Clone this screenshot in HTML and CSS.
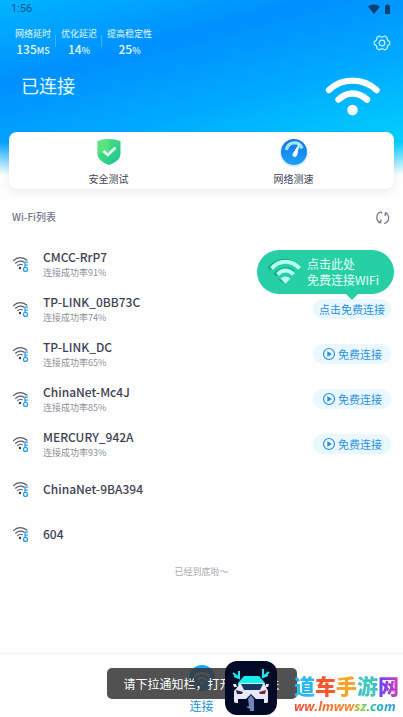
FILE: index.html
```html
<!DOCTYPE html>
<html lang="zh-CN">

<head>
  <meta charset="utf-8">
  <meta name="viewport" content="width=device-width, initial-scale=1">
  <title>WiFi</title>
  <link rel="stylesheet" href="styles.css">
</head>

<body>
  <!-- shared icons -->
  <svg class="defs" aria-hidden="true">
    <symbol id="wifi-key" viewBox="0 0 18 18">
      <g fill="none" stroke="#565b69" stroke-width="1.2" stroke-linecap="round">
        <path d="M1.500 5.600C5.500 1.600 11 1.600 15 5.200" />
        <path d="M3.600 8.200C6.400 5.500 10 5.500 12 7.200" />
        <path d="M5.600 10.600C7.200 9.200 9 9 10.200 9.700" />
      </g>
      <circle cx="8" cy="13" r="1.200" fill="#333a4a" />
      <g fill="none" stroke="#2a9df0" stroke-width="1.300">
        <circle cx="13.500" cy="14.400" r="2" />
        <path d="M13 12.400V7.200H16M13 10.200H15.800" />
      </g>
    </symbol>
    <symbol id="play" viewBox="0 0 14 14">
      <circle cx="7" cy="7" r="5.500" fill="none" stroke="#2a8fe0" stroke-width="1.200" />
      <path d="M5.300 4.600Q5.300 4.200 5.800 4.400L9.300 6.600Q9.700 7 9.300 7.400L5.800 9.600Q5.300 9.800 5.300 9.400Z" fill="#2a8fe0" />
    </symbol>
  </svg>

  <header class="header">
    <div class="status">
      <span>1:56</span>
      <svg width="24" height="11" viewBox="0 0 24 11">
        <path d="M0 2.500Q6 -1.500 12 2.500L6 10Z" fill="#0a3f73" />
        <path d="M17 1.500H18.200V0.500H20.600V1.500H22V10H17Z" fill="#0a3f73" />
      </svg>
    </div>

    <div class="top">
      <ul class="stats">
        <li><span>网络延时</span><b>135<small>MS</small></b></li>
        <li><span>优化延迟</span><b>14<small>%</small></b></li>
        <li><span>提高稳定性</span><b>25<small>%</small></b></li>
      </ul>
      <button class="icon-btn" type="button" aria-label="设置">
        <svg width="18" height="18" viewBox="0 0 18 18" fill="none" stroke="#c4f4ff" stroke-width="1.200" stroke-linejoin="round">
          <path d="M6.200 2.100Q9 4 11.800 2.100L14 3.400Q14 6.700 16.700 7.600V10.400Q14 11.300 14 14.600L11.800 15.900Q9 14 6.200 15.900L4 14.600Q4 11.300 1.300 10.400V7.600Q4 6.700 4 3.400Z" />
          <circle cx="9" cy="9" r="2.800" />
        </svg>
      </button>
    </div>

    <div class="hero">
      <h1>已连接</h1>
      <svg width="56" height="44" viewBox="0 0 56 44" fill="none" stroke="#fff" stroke-linecap="round">
        <path d="M4 18C17 5.500 38 5.500 51.500 18" stroke-width="6.400" />
        <path d="M13.500 27.500C22 19.500 33 19.500 42 27.500" stroke-width="6.400" />
        <circle cx="27.500" cy="38" r="5.300" fill="#fff" stroke="none" />
      </svg>
    </div>
  </header>

  <nav class="tools">
    <a href="#">
      <svg width="30" height="30" viewBox="0 0 30 30">
        <defs>
          <linearGradient id="shield" x1="0" y1="0" x2="1" y2="1">
            <stop offset="0" stop-color="#52df7e" />
            <stop offset="0.500" stop-color="#38d684" />
            <stop offset="1" stop-color="#16bf9c" />
          </linearGradient>
        </defs>
        <path d="M15 2Q21 2 26.500 4V17Q26.500 24 15 28Q3.500 24 3.500 17V4Q9 2 15 2Z" fill="url(#shield)" />
        <path d="M15 2Q9 2 3.500 4V17L15 15Z" fill="#7bed83" opacity="0.400" />
        <path d="M9.500 14L13.800 18L21.500 10.500" fill="none" stroke="#e8fff3" stroke-width="2.600" />
      </svg>
      安全测试
    </a>
    <a href="#">
      <svg width="30" height="30" viewBox="0 0 30 30">
        <defs>
          <linearGradient id="gauge" x1="0" y1="0" x2="0" y2="1">
            <stop offset="0" stop-color="#1673e6" />
            <stop offset="1" stop-color="#1ba2fb" />
          </linearGradient>
        </defs>
        <circle cx="15" cy="16" r="14" fill="#d7effd" />
        <circle cx="15" cy="15" r="13" fill="url(#gauge)" />
        <path d="M7.300 13C9 4.300 20.500 3.300 22.800 11.500" fill="none" stroke="#9be8fc" stroke-width="3.400" />
        <path d="M20 7.500L17.600 18.500A2 2 0 0 1 13.800 17.500Z" fill="#f0fcff" stroke="#f0fcff" stroke-linejoin="round" />
      </svg>
      网络测速
    </a>
  </nav>

  <main>
    <div class="list-head">
      <h2>Wi-Fi列表</h2>
      <button class="icon-btn" type="button" aria-label="刷新">
        <svg width="14" height="16" viewBox="0 0 14 16" fill="none" stroke="#6b727d" stroke-width="1.200">
          <path d="M6 4.200L4.800 3A5.600 5.600 0 0 0 4.400 13.600M4.800 10.500V13.600H2.500M8 14.500A5.600 5.600 0 0 0 9.600 4M9.200 7V4H11.500" />
        </svg>
      </button>
    </div>

    <ul class="list">
      <li>
        <svg class="signal"><use href="#wifi-key" /></svg>
        <div class="name"><b>CMCC-RrP7</b><span>连接成功率91%</span></div>
      </li>
      <li>
        <svg class="signal"><use href="#wifi-key" /></svg>
        <div class="name"><b>TP-LINK_0BB73C</b><span>连接成功率74%</span></div>
        <button class="connect" type="button">点击免费连接</button>
        <div class="tip">
          <svg width="34" height="28" viewBox="0 0 34 28">
            <g fill="none" stroke="#0ca589" stroke-width="4">
              <path d="M1 11C9 1 22 0 30 9M7 17C13 10 20 10 25 14" />
            </g>
            <path d="M10 21L17 26L21 23" fill="#0ca589" />
            <g fill="none" stroke="#b5fff0" stroke-width="4">
              <path d="M3.500 10.500C11 1.500 24 1.500 31.500 10.500M9.500 16.500C14 11 21 11 25.500 16.500" />
            </g>
            <path d="M12.500 20.500Q17.500 16.500 22.500 20.500L17.500 26Z" fill="#b5fff0" />
          </svg>
          <p>点击此处<br>免费连接WIFi</p>
        </div>
      </li>
      <li>
        <svg class="signal"><use href="#wifi-key" /></svg>
        <div class="name"><b>TP-LINK_DC</b><span>连接成功率65%</span></div>
        <button class="connect" type="button"><svg><use href="#play" /></svg>免费连接</button>
      </li>
      <li>
        <svg class="signal"><use href="#wifi-key" /></svg>
        <div class="name"><b>ChinaNet-Mc4J</b><span>连接成功率85%</span></div>
        <button class="connect" type="button"><svg><use href="#play" /></svg>免费连接</button>
      </li>
      <li>
        <svg class="signal"><use href="#wifi-key" /></svg>
        <div class="name"><b>MERCURY_942A</b><span>连接成功率93%</span></div>
        <button class="connect" type="button"><svg><use href="#play" /></svg>免费连接</button>
      </li>
      <li>
        <svg class="signal"><use href="#wifi-key" /></svg>
        <div class="name"><b>ChinaNet-9BA394</b></div>
      </li>
      <li>
        <svg class="signal"><use href="#wifi-key" /></svg>
        <div class="name"><b>604</b></div>
      </li>
    </ul>
    <p class="end">已经到底啦～</p>
  </main>

  <footer class="tabbar">
    <a href="#">
      <svg width="26" height="26" viewBox="0 0 26 26">
        <circle cx="13" cy="13" r="13" fill="#17a5f7" />
        <g fill="none" stroke="#fff" stroke-width="2" stroke-linecap="round">
          <path d="M6 11C10 7 16 7 20 11M9 14.500C11.500 12 14.500 12 17 14.500" />
        </g>
        <circle cx="13" cy="18" r="1.600" fill="#fff" />
      </svg>
      连接
    </a>
    <div class="toast">请下拉通知栏，打开数据开关</div>
    <div class="brand">
      <svg width="52" height="54" viewBox="0 0 52 54">
        <rect width="52" height="54" rx="12" fill="#030a26" />
        <path d="M19 15H34L40 22V24H13V22Z" fill="#16eee9" />
        <path d="M15 22H39L42 28Q43 29 43 31V41Q43 42 41 42H39V38H13V42H11Q9 42 9 40V31Q9 29 11 28Z" fill="#e4eafb" />
        <path d="M16 23H38L35 29H19Z" fill="#173664" />
        <path d="M8 23H11L12 26H9ZM41 23H44L43 26H40Z" fill="#e4eafb" />
        <path d="M11 29L18 31L17 33H12Z" fill="#35233e" />
        <path d="M41 29L34 31L35 33H40Z" fill="#7b2634" />
        <path d="M26 33L32 39H29V50H26V47H21L24 44V39H20Z" fill="#030a26" />
        <path d="M23 38L26 34L29 38V50H25V48L21 46L24 45Z" fill="#6f85bd" />
        <path d="M8 12L13 16M14 10V17L9 15M44 11L39 15M38 8V16L43 14" fill="none" stroke="#20e4ef" stroke-width="2" />
      </svg>
      <div class="brand-text">
        <strong>道车手游网</strong>
        <em>ww.lmwwsz.com</em>
      </div>
    </div>
  </footer>
</body>

</html>
```
FILE: styles.css
```css
* {
  box-sizing: border-box;
  margin: 0;
  padding: 0;
}

body {
  display: flex;
  flex-direction: column;
  min-height: 100vh;
  background: #fefefe;
  color: #3d4254;
  font-family: "Noto Sans CJK SC", sans-serif;
  font-size: 10px;
}

ul {
  list-style: none;
}

a {
  color: inherit;
  text-decoration: none;
}

button {
  border: none;
  background: none;
  font-family: inherit;
  cursor: pointer;
}

svg {
  display: block;
  flex: none;
}

.defs {
  position: absolute;
  width: 0;
  height: 0;
}

.header {
  height: 176px;
  background:
    linear-gradient(to bottom, rgba(254, 254, 254, 0) 142px, #fefefe 175px),
    linear-gradient(165deg, #00b5ff 0%, #0090ff 30%, #00a8ff 56%, #00ccff 85%);
}

.status {
  display: flex;
  align-items: center;
  justify-content: space-between;
  padding: 3px 11px 0 11px;
  color: #075585;
  font-family: Roboto, sans-serif;
  font-size: 11px;
  line-height: 12px;
}

.top {
  display: flex;
  justify-content: space-between;
  padding: 12px 12px 0 15px;
}

.stats {
  display: flex;
  color: #e4f8ff;
}

.stats li {
  display: flex;
  flex-direction: column;
  align-items: center;
  font-size: 9px;
  line-height: 14px;
}

.stats li + li {
  margin-left: 4px;
  padding-left: 6px;
  background: linear-gradient(#3cb4ff, #3cb4ff) 0 8px / 1px 12px no-repeat;
}

.stats b {
  font-size: 12px;
  font-weight: 500;
  line-height: 16px;
}

.stats small {
  font-size: 9px;
}

.icon-btn {
  display: flex;
  align-items: center;
}

.hero {
  display: flex;
  justify-content: space-between;
  padding: 13px 22px 0 21px;
}

.hero h1 {
  color: #e4fbff;
  font-size: 18px;
  font-weight: 400;
  line-height: 26px;
}

.tools {
  display: flex;
  margin: -44px 9px 0;
  padding: 5px 8px 2px 7px;
  border-radius: 8px;
  background: #fff;
  box-shadow: 0 3px 10px rgba(0, 0, 0, 0.08);
}

.tools a {
  display: flex;
  flex: 1;
  flex-direction: column;
  align-items: center;
  gap: 4px;
  font-size: 10px;
  line-height: 16px;
}

.list-head {
  display: flex;
  align-items: center;
  justify-content: space-between;
  padding: 16px 13px 0 12px;
}

.list-head h2 {
  color: #70758c;
  font-size: 10px;
  font-weight: 500;
  line-height: 24px;
}

.list {
  padding: 12px 12px 0;
}

.list li {
  display: flex;
  position: relative;
  align-items: center;
  height: 45px;
}

.signal {
  width: 18px;
  height: 18px;
}

.name {
  display: flex;
  flex: 1;
  flex-direction: column;
  margin-left: 13px;
}

.name b {
  font-size: 12px;
  font-weight: 500;
  line-height: 18px;
}

.name span {
  color: #8b8e98;
  font-size: 9px;
  line-height: 14px;
}

.connect {
  display: flex;
  align-items: center;
  justify-content: center;
  gap: 2px;
  width: 78px;
  height: 20px;
  border-radius: 10px;
  background: #e9f8ff;
  color: #2a8fe0;
  font-size: 11px;
}

.connect svg {
  width: 14px;
  height: 14px;
}

/* bubble over the first connect button */
.tip {
  display: flex;
  position: absolute;
  right: -3px;
  bottom: 37px;
  align-items: center;
  gap: 5px;
  height: 44px;
  padding: 0 15px 0 11px;
  border-radius: 22px;
  background: #27cfa5;
  color: #e6fff8;
  font-size: 12px;
  line-height: 16px;
}

.tip::after {
  content: "";
  position: absolute;
  right: 36px;
  bottom: -6px;
  border: 6px solid transparent;
  border-top-color: #27cfa5;
  border-bottom: none;
}

.end {
  padding-top: 8px;
  color: #a9abb1;
  font-size: 9px;
  line-height: 16px;
  text-align: center;
}

.tabbar {
  position: relative;
  margin-top: auto;
  padding: 11px 0 2px;
  border-top: 1px solid #f1f1f1;
}

.tabbar a {
  display: flex;
  flex-direction: column;
  align-items: center;
  gap: 6px;
  color: #268fd8;
  font-size: 12px;
  line-height: 18px;
}

.toast {
  position: absolute;
  top: 14px;
  left: 50%;
  width: 190px;
  margin-left: -95px;
  padding: 0 17px;
  border-radius: 5px;
  background: rgba(55, 55, 55, 0.87);
  color: #fff;
  font-size: 12px;
  line-height: 31px;
  white-space: nowrap;
}

.brand {
  display: flex;
  position: absolute;
  right: 4px;
  bottom: 2px;
  align-items: flex-end;
  gap: 17px;
}

.brand-text {
  display: flex;
  flex-direction: column;
  padding-bottom: 1px;
  font-weight: 900;
}

.brand strong {
  background: linear-gradient(90deg, #28b7ef 0 18%, #f6572e 22% 38%, #f7a52c 42% 58%, #3ec7bd 62% 78%, #6645ed 82%, #d83bb8);
  background-clip: text;
  color: transparent;
  font-size: 21px;
  line-height: 26px;
}

.brand em {
  background: linear-gradient(90deg, #f04b38, #f68b25 55%, #8ed33b 64%, #23b6b6 76%, #2c9aef);
  background-clip: text;
  color: transparent;
  font-family: "Open Sans", sans-serif;
  font-size: 13px;
  font-weight: 700;
  line-height: 16px;
}
```
